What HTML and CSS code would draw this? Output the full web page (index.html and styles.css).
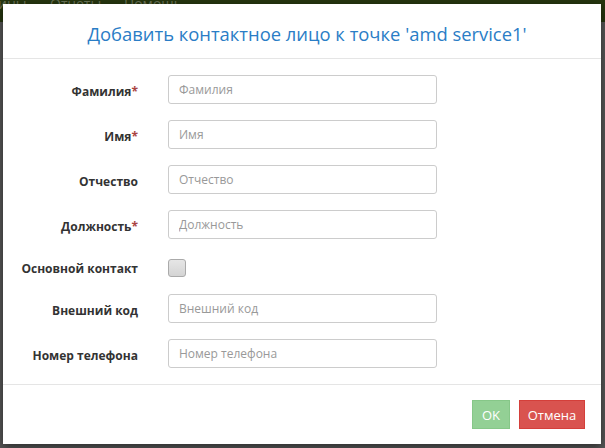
FILE: index.html
```html
<!DOCTYPE html>
<html>
<head>
<meta charset="utf-8">
<link rel="stylesheet" href="styles.css">
</head>
<body>
<div class="topbar">
  <span class="nav n1">ины</span>
  <span class="nav n2">Отчеты</span>
  <span class="nav n3">Помощь</span>
</div>
<div class="modal">
  <div class="modal-header">
    <h4 class="modal-title">Добавить контактное лицо к точке 'amd service1'</h4>
  </div>
  <div class="modal-body">
    <div class="row">
      <label class="lbl">Фамилия<span class="req">*</span></label>
      <input class="field" type="text" placeholder="Фамилия">
    </div>
    <div class="row">
      <label class="lbl">Имя<span class="req">*</span></label>
      <input class="field" type="text" placeholder="Имя">
    </div>
    <div class="row">
      <label class="lbl">Отчество</label>
      <input class="field" type="text" placeholder="Отчество">
    </div>
    <div class="row">
      <label class="lbl">Должность<span class="req">*</span></label>
      <input class="field" type="text" placeholder="Должность">
    </div>
    <div class="row row-check">
      <label class="lbl">Основной контакт</label>
      <span class="check"></span>
    </div>
    <div class="row">
      <label class="lbl">Внешний код</label>
      <input class="field" type="text" placeholder="Внешний код">
    </div>
    <div class="row">
      <label class="lbl">Номер телефона</label>
      <input class="field" type="text" placeholder="Номер телефона">
    </div>
  </div>
  <div class="modal-footer">
    <button class="btn btn-ok">OK</button>
    <button class="btn btn-cancel">Отмена</button>
  </div>
</div>
</body>
</html>
```
FILE: styles.css
```css
html, body {
  margin: 0;
  padding: 0;
  height: 100%;
}
body {
  background: #575757;
  font-family: "Open Sans", "Noto Sans", sans-serif;
  position: relative;
  overflow: hidden;
}
.topbar {
  height: 22px;
  background: #26360f;
  position: relative;
}
.nav {
  position: absolute;
  top: -6px;
  color: #6a7358;
  font-size: 14px;
}
.n1 { left: -2px; }
.n2 { left: 50px; }
.n3 { left: 124px; }
.modal {
  position: absolute;
  left: 3px;
  top: 4px;
  width: 598px;
  background: #fff;
  box-shadow: 0 3px 9px rgba(0,0,0,0.5);
}
.modal-header {
  height: 54px;
  border-bottom: 1px solid #e5e5e5;
  display: flex;
  align-items: center;
  justify-content: center;
}
.modal-title {
  margin: 0;
  font-weight: 400;
  font-size: 18.4px;
  color: #2a7dc6;
  position: relative;
  top: 2px;
  left: 5px;
}
.modal-body {
  padding: 16px 0;
  display: flex;
  flex-direction: column;
  gap: 16px;
}
.row {
  display: grid;
  grid-template-columns: 134px 269px;
  column-gap: 31px;
  align-items: center;
  height: 29px;
}
.row-check {
  height: 23px;
}
.lbl {
  text-align: right;
  font-weight: 700;
  font-size: 12px;
  color: #333;
  position: relative;
  top: 2px;
  left: 1px;
}
.req {
  color: #a94442;
}
.field {
  box-sizing: border-box;
  width: 269px;
  height: 29px;
  border: 1px solid #ccc;
  border-radius: 3px;
  padding: 0 10px;
  font-family: "Open Sans", "Noto Sans", sans-serif;
  font-size: 12px;
  color: #555;
  outline: none;
}
.field::placeholder {
  color: #999;
}
.check {
  box-sizing: border-box;
  width: 18px;
  height: 18px;
  border: 1px solid #aaa;
  border-radius: 3px;
  background: linear-gradient(#e6e6e6, #d4d4d4);
  margin-top: 4px;
  align-self: start;
}
.modal-footer {
  border-top: 1px solid #e5e5e5;
  padding: 15px 16px 15px;
  display: flex;
  justify-content: flex-end;
  gap: 9px;
}
.btn {
  height: 29px;
  border: 1px solid transparent;
  border-radius: 0;
  font-family: "Open Sans", "Noto Sans", sans-serif;
  font-size: 13px;
  color: #fff;
  padding: 0 10px;
}
.btn-ok {
  width: 38px;
  padding: 0;
  background: #93d095;
  border-color: #86c788;
}
.btn-cancel {
  width: 66px;
  padding: 0;
  background: #d9534f;
  border-color: #d43f3a;
}
```
